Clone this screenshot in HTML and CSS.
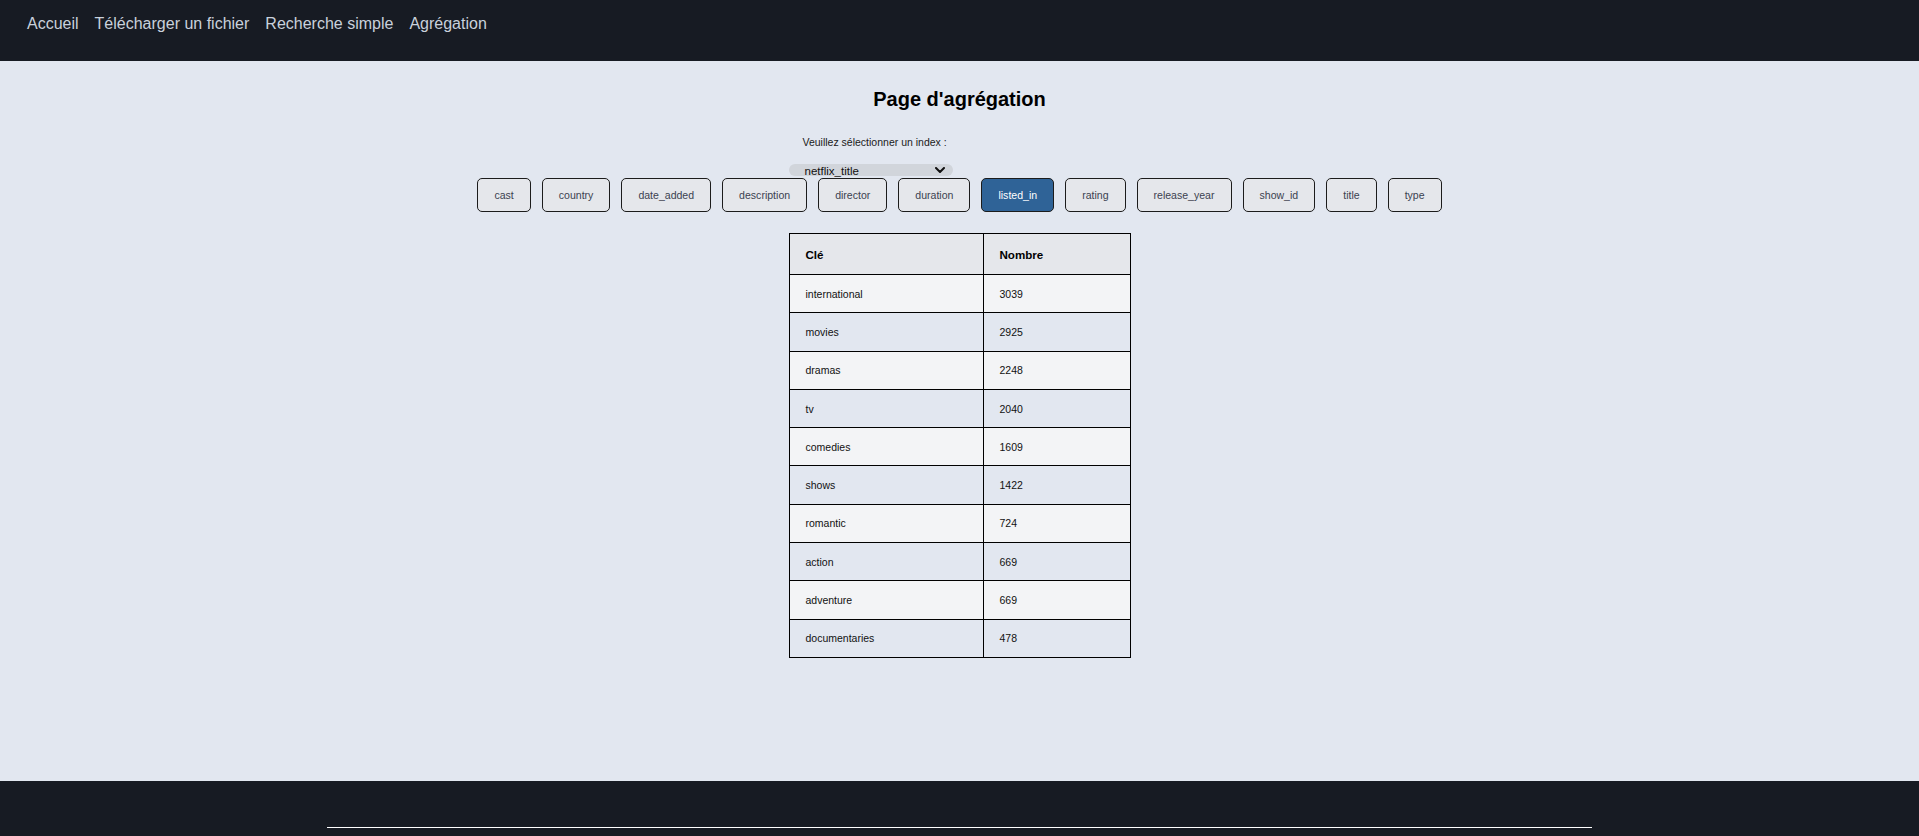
FILE: index.html
```html
<!DOCTYPE html>
<html lang="fr">
<head>
<meta charset="utf-8">
<title>Page d'agrégation</title>
<link rel="stylesheet" href="styles.css">
</head>
<body>
<header class="topbar">
  <nav class="nav">
    <a class="nav-link" href="#">Accueil</a>
    <a class="nav-link" href="#">Télécharger un fichier</a>
    <a class="nav-link" href="#">Recherche simple</a>
    <a class="nav-link" href="#">Agrégation</a>
  </nav>
</header>
<main class="main">
  <h1 class="title">Page d'agrégation</h1>
  <div class="picker">
    <label class="picker-label" for="idx">Veuillez sélectionner un index :</label>
    <div class="select">
      <span class="select-value">netflix_title</span>
      <svg class="chevron" viewBox="0 0 10 6" width="10" height="6"><path d="M1 1 L5 5 L9 1" fill="none" stroke="#111" stroke-width="2" stroke-linecap="round" stroke-linejoin="round"/></svg>
    </div>
  </div>
  <div class="fields">
    <button class="field">cast</button>
    <button class="field">country</button>
    <button class="field">date_added</button>
    <button class="field">description</button>
    <button class="field">director</button>
    <button class="field">duration</button>
    <button class="field active">listed_in</button>
    <button class="field">rating</button>
    <button class="field">release_year</button>
    <button class="field">show_id</button>
    <button class="field">title</button>
    <button class="field">type</button>
  </div>
  <table class="agg">
    <thead>
      <tr><th class="col-key">Clé</th><th class="col-count">Nombre</th></tr>
    </thead>
    <tbody>
      <tr><td>international</td><td>3039</td></tr>
      <tr><td>movies</td><td>2925</td></tr>
      <tr><td>dramas</td><td>2248</td></tr>
      <tr><td>tv</td><td>2040</td></tr>
      <tr><td>comedies</td><td>1609</td></tr>
      <tr><td>shows</td><td>1422</td></tr>
      <tr><td>romantic</td><td>724</td></tr>
      <tr><td>action</td><td>669</td></tr>
      <tr><td>adventure</td><td>669</td></tr>
      <tr><td>documentaries</td><td>478</td></tr>
    </tbody>
  </table>
</main>
<footer class="footer">
  <hr class="footer-rule">
</footer>
</body>
</html>
```
FILE: styles.css
```css
* { box-sizing: border-box; }
html, body {
  margin: 0;
  padding: 0;
}
body {
  background: #e2e7f0;
  font-family: "Liberation Sans", Arial, sans-serif;
  color: #111;
  overflow: hidden;
}
.topbar {
  background: #171b23;
  height: 61px;
  padding: 15px 27px 0;
}
.nav {
  display: flex;
  gap: 16px;
}
.nav-link {
  color: #c9d1dc;
  text-decoration: none;
  font-size: 16px;
  line-height: 18px;
}
.main {
  height: 720px;
  padding-top: 26px;
  display: flex;
  flex-direction: column;
  align-items: center;
}
.title {
  margin: 0;
  font-size: 20px;
  line-height: 24px;
  font-weight: bold;
  color: #000;
}
.picker {
  width: 342px;
  margin-top: 25px;
  display: flex;
  flex-direction: column;
  align-items: flex-start;
}
.picker-label {
  font-size: 10.5px;
  line-height: 12px;
  color: #1a1a1a;
  padding-left: 14px;
}
.select {
  margin-top: 16px;
  width: 164px;
  height: 12px;
  background: #d1d5db;
  border-radius: 6px;
  display: flex;
  align-items: center;
  justify-content: space-between;
  padding: 0 8px 0 16px;
}
.select-value {
  font-size: 11.5px;
  line-height: 12px;
  color: #111;
  position: relative;
  top: 1px;
}
.chevron { display: block; }
.fields {
  margin-top: 2px;
  display: flex;
  gap: 11px;
}
.field {
  height: 34px;
  padding: 0 16px;
  background: #e5e7eb;
  border: 1px solid #1c1c1c;
  border-radius: 5px;
  font-family: "Liberation Sans", Arial, sans-serif;
  font-size: 10.55px;
  color: #3b4250;
  cursor: pointer;
}
.field.active {
  background: #2f6397;
  color: #fff;
}
.agg {
  margin-top: 21px;
  width: 342px;
  border-collapse: collapse;
  border: 1px solid #000;
}
.agg th, .agg td {
  border: 1px solid #000;
  text-align: left;
  padding: 0 16px;
}
.agg th {
  height: 41px;
  background: #e5e7eb;
  font-size: 11.6px;
  font-weight: bold;
  color: #000;
}
.col-key { width: 194px; }
.agg td {
  height: 38.3px;
  font-size: 10.5px;
  color: #111;
}
.agg tbody tr:nth-child(odd) td { background: #f3f4f6; }
.agg tbody tr:nth-child(even) td { background: #e2e7f0; }
.footer {
  background: #171b23;
  height: 200px;
  padding-top: 46px;
}
.footer-rule {
  margin: 0 auto;
  width: 1265px;
  border: 0;
  border-top: 1px solid #fff;
  height: 0;
}
```
